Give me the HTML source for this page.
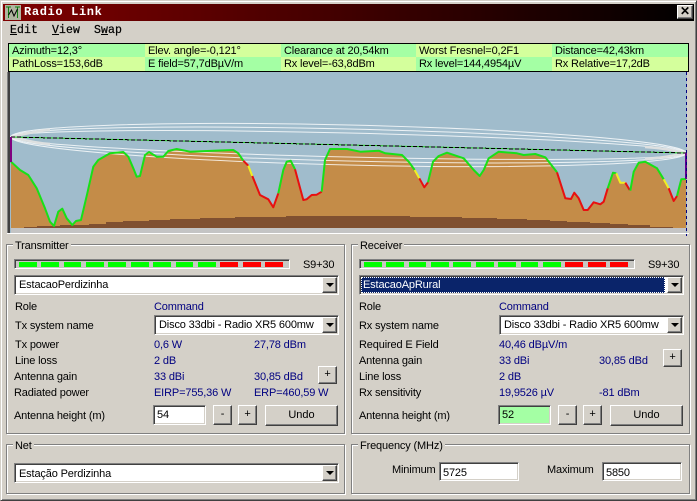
<!DOCTYPE html>
<html><head><meta charset="utf-8"><style>
html,body{margin:0;padding:0;background:#d4d0c8}
#w{position:relative;width:697px;height:501px;overflow:hidden;background:#d4d0c8;font:11px "Liberation Sans",sans-serif;letter-spacing:-.15px;color:#000}
#w div{position:absolute;box-sizing:border-box}
.t{white-space:nowrap;line-height:14px;height:14px;margin-top:1px}
.b{color:#000080}
.g{border:1px solid #808080;box-shadow:1px 1px 0 #fff,inset 1px 1px 0 #fff}
.l{background:#d4d0c8;padding:0 2px;line-height:13px;height:13px;white-space:nowrap;margin-top:1px}
.in{background:#fff;border:1px solid;border-color:#808080 #fff #fff #808080;box-shadow:inset 1px 1px 0 #404040,inset -1px -1px 0 #d4d0c8;white-space:nowrap}
.bt{background:#d4d0c8;border:1px solid;border-color:#fff #404040 #404040 #fff;box-shadow:inset -1px -1px 0 #808080;text-align:center;white-space:nowrap}
.ar{width:0;height:0;border-left:4px solid transparent;border-right:4px solid transparent;border-top:4px solid #000}
.c{white-space:nowrap;line-height:15px}
.m{background:#c8c8c4;border:1px solid;border-color:#808080 #fff #fff #808080;box-shadow:inset 1px 1px 0 #404040}
.s{height:5px;top:2px}
.ce{height:14px;line-height:14px;white-space:nowrap;padding-left:3px}
.r2{line-height:15px}
.y{background:#d4ff9c}.n{background:#a4ffa4}
</style></head><body><div id="w">
<div style="left:0;top:0;width:697px;height:501px;border:1px solid;border-color:#d4d0c8 #404040 #404040 #d4d0c8;box-shadow:inset 1px 1px 0 #fff,inset -1px -1px 0 #808080"></div>
<div style="left:3px;top:4px;width:691px;height:17px;background:linear-gradient(90deg,#800000,#000)"></div>
<div style="left:5px;top:5px;width:16px;height:15px;background:#b0b4a0"><svg width="16" height="15" style="display:block"><path d="M1 2h5M3.500 2v11M10 2h5M12.500 2v11" stroke="#108010" fill="none"/><path d="M3.500 10L6.500 5 9 11 12.500 4" stroke="#000" fill="none"/></svg></div>
<div class="t" style="left:24px;top:5px;margin:0;color:#fff;font:bold 12px/14px 'Liberation Mono',monospace;letter-spacing:.65px">Radio Link</div>
<div class="bt" style="left:677px;top:5px;width:16px;height:14px;font:bold 12px/11px 'Liberation Sans',sans-serif">✕</div>
<div class="t" style="left:10px;top:24px;margin:0;font:11.5px/14px 'Liberation Mono',monospace;-webkit-text-stroke:.2px #000;letter-spacing:.1px"><u>E</u>dit</div>
<div class="t" style="left:52px;top:24px;margin:0;font:11.5px/14px 'Liberation Mono',monospace;-webkit-text-stroke:.2px #000;letter-spacing:.1px"><u>V</u>iew</div>
<div class="t" style="left:94px;top:24px;margin:0;font:11.5px/14px 'Liberation Mono',monospace;-webkit-text-stroke:.2px #000;letter-spacing:.1px">S<u>w</u>ap</div>

<div style="left:8px;top:43px;width:681px;height:29px;border:1px solid #000;background:#000"></div>
<div class="ce n" style="left:9px;top:44px;width:136px">Azimuth=12,3°</div>
<div class="ce y" style="left:145px;top:44px;width:136px">Elev. angle=-0,121°</div>
<div class="ce n" style="left:281px;top:44px;width:135px">Clearance at 20,54km</div>
<div class="ce y" style="left:416px;top:44px;width:136px">Worst Fresnel=0,2F1</div>
<div class="ce n" style="left:552px;top:44px;width:136px">Distance=42,43km</div>
<div class="ce y r2" style="left:9px;top:57px;width:136px">PathLoss=153,6dB</div>
<div class="ce n r2" style="left:145px;top:57px;width:136px">E field=57,7dBµV/m</div>
<div class="ce y r2" style="left:281px;top:57px;width:135px">Rx level=-63,8dBm</div>
<div class="ce n r2" style="left:416px;top:57px;width:136px">Rx level=144,4954µV</div>
<div class="ce y r2" style="left:552px;top:57px;width:136px">Rx Relative=17,2dB</div>

<svg width="697" height="240" style="position:absolute;left:0;top:0">
<rect x="7" y="72" width="1" height="161" fill="#808080"/><rect x="8" y="72" width="2" height="161" fill="#404040"/>
<rect x="7" y="233" width="682" height="1" fill="#fff"/>
<rect x="10" y="72" width="677" height="161" fill="#a0bccc"/>
<rect x="11" y="228" width="675" height="5" fill="#c4c4c4"/>
<path fill="#c48c48" d="M11 161.700 20 170 28.300 175 36.700 188.300 45 208.300 50 221.700 54 226 58.300 211.700 62.300 208.700 66.700 218.300 72.300 225 76 221 81 220 87.300 193.300 93.300 166.700 98.300 160 110 153.300 123.300 152 128.300 156.700 133.300 168.300 136.700 176.700 140 176 145 155 149 152 156.700 156.700 163.300 156.700 168.300 151 176.700 149 190 151.700 213.300 150.700 233.300 150 238.300 153.300 243.300 160.700 248.300 165.700 252.300 176 260 195 268.300 199.300 273.300 207.300 278.300 193.300 283.300 170 286.700 161.700 290.700 160.700 295 169.300 303.300 200 306.700 199.300 311.700 195 316.700 194.700 321.700 191.700 325 160 330 149 347 149 360.300 151.700 378.700 150.700 385.300 153.300 402 155 408.700 161.700 414.700 170 419.300 178.300 424.300 187.300 428 182.300 433 161.700 438.700 156 447 152.700 463.700 158.300 473.700 170 479.700 176 483.700 170 488.700 158.300 498.700 151.700 517 153.300 523.700 155 535.300 154 545.300 157.300 557 172.300 565.300 198.300 571 199 574.300 192.700 578.700 198.300 583.700 210 587.700 210 593.700 202.300 600.300 204.300 603.700 201.700 607.700 188.300 613 172.700 616.300 173.300 620.300 182.700 625.300 182.700 629.700 190 630.300 190.700 633.700 171.700 638.700 162.700 645.300 161.700 657 168.300 663.700 179.300 668.700 188.300 673.700 201 677 196 681.300 179.300 686 179 686 228 11 228Z"/>
<path fill="#805030" d="M24 228V227H37V226H60V225H89V224H106V222H123V221H149V220H170V219H200V218H235V217H286V216H410V217H462V218H497V219H527V220H550V221H567V222H590V223H610V224H628V225H650V227H673V228Z"/>
<g fill="none" stroke="#fff" stroke-width="1" stroke-opacity=".8" transform="rotate(1.36 348.500 145)">
<ellipse cx="348.500" cy="145" rx="338" ry="20"/>
<ellipse cx="348.500" cy="145" rx="338" ry="16"/>
<ellipse cx="348.500" cy="145" rx="338" ry="12"/>
</g>
<path d="M11 137C30 133 36 131 50 130M11 137C30 141 36 143 50 144M686 153C665 149 660 148 645 147M686 153C665 157 660 158 645 159" stroke="#dde0e0" stroke-width="2.500" fill="none"/>
<path d="M11 137 686 153" stroke="#20d020" fill="none"/>
<path d="M11 137 686 153" stroke="#000" stroke-dasharray="4 2" fill="none" shape-rendering="crispEdges"/>
<g fill="none" stroke-width="2" stroke-linejoin="round">
<path stroke="#18e018" d="M11 161.700 20 170 28.300 175 36.700 188.300 45 208.300 50 221.700 54 226 58.300 211.700 62.300 208.700 66.700 218.300 72.300 225 76 221 81 220 87.300 193.300 93.300 166.700 98.300 160 110 153.300 123.300 152 128.300 156.700 133.300 168.300 136.700 176.700 140 176 145 155 149 152 156.700 156.700 163.300 156.700 168.300 151 176.700 149 190 151.700 213.300 150.700 233.300 150 238.300 153.300 243.300 160.700"/>
<path stroke="#e81010" d="M243.300 160.700 248.300 165.700"/>
<path stroke="#f0f020" d="M248.300 165.700 252.300 176"/>
<path stroke="#e81010" d="M252.300 176 260 195 268.300 199.300 273.300 207.300 278.300 193.300"/>
<path stroke="#18e018" d="M278.300 193.300 283.300 170 286.700 161.700 290.700 160.700 295 169.300"/>
<path stroke="#e81010" d="M295 169.300 303.300 200 306.700 199.300 311.700 195 316.700 194.700 321.700 191.700"/>
<path stroke="#18e018" d="M321.700 191.700 325 160 330 149 347 149 360.300 151.700 378.700 150.700 385.300 153.300 402 155 408.700 161.700 414.700 170"/>
<path stroke="#f0f020" d="M414.700 170 419.300 178.300"/>
<path stroke="#e81010" d="M419.300 178.300 424.300 187.300 428 182.300"/>
<path stroke="#18e018" d="M428 182.300 433 161.700 438.700 156 447 152.700 463.700 158.300 473.700 170 479.700 176 483.700 170 488.700 158.300 498.700 151.700 517 153.300 523.700 155 535.300 154 545.300 157.300 557 172.300"/>
<path stroke="#e81010" d="M557 172.300 565.300 198.300 571 199 574.300 192.700 578.700 198.300 583.700 210 587.700 210 593.700 202.300 600.300 204.300 603.700 201.700 607.700 188.300"/>
<path stroke="#18e018" d="M607.700 188.300 613 172.700 616.300 173.300"/>
<path stroke="#f0f020" d="M616.300 173.300 620.300 182.700 625.300 182.700"/>
<path stroke="#e81010" d="M625.300 182.700 629.700 190"/>
<path stroke="#18e018" d="M630.300 190.700 633.700 171.700 638.700 162.700 645.300 161.700 657 168.300 663.700 179.300"/>
<path stroke="#f0f020" d="M663.700 179.300 668.700 188.300"/>
<path stroke="#e81010" d="M668.700 188.300 673.700 201 677 196"/>
<path stroke="#18e018" d="M677 196 681.300 179.300 686 179"/>
</g>
<rect x="10" y="137" width="2" height="25" fill="#800080"/>
<rect x="685" y="153" width="2" height="26" fill="#600090"/>
<path d="M686.500 72V236" stroke="#000080" stroke-dasharray="3 3"/>
</svg>

<!-- Transmitter -->
<div class="g" style="left:6px;top:244px;width:339px;height:190px"></div>
<div class="l" style="left:13px;top:239px">Transmitter</div>
<div class="m" style="left:14px;top:259px;width:276px;height:10px">
<div class="s" style="left:4px;width:18px;background:#0f0"></div><div class="s" style="left:26px;width:18px;background:#0f0"></div><div class="s" style="left:49px;width:17px;background:#0f0"></div><div class="s" style="left:71px;width:18px;background:#0f0"></div><div class="s" style="left:93px;width:18px;background:#0f0"></div><div class="s" style="left:116px;width:18px;background:#0f0"></div><div class="s" style="left:138px;width:18px;background:#0f0"></div><div class="s" style="left:161px;width:17px;background:#0f0"></div><div class="s" style="left:183px;width:18px;background:#0f0"></div><div class="s" style="left:205px;width:18px;background:#f00"></div><div class="s" style="left:228px;width:18px;background:#f00"></div><div class="s" style="left:250px;width:18px;background:#f00"></div>
</div>
<div class="t" style="left:303px;top:257px">S9+30</div>
<div class="in c" style="left:14px;top:275px;width:325px;height:20px;padding:2px 0 0 4px">EstacaoPerdizinha</div>
<div class="bt" style="left:322px;top:277px;width:15px;height:16px"><div class="ar" style="left:3px;top:5px"></div></div>
<div class="t" style="left:15px;top:299px">Role</div><div class="t b" style="left:154px;top:299px">Command</div>
<div class="t" style="left:15px;top:318px">Tx system name</div>
<div class="in c" style="left:154px;top:315px;width:185px;height:20px;padding:2px 0 0 4px">Disco 33dbi - Radio XR5 600mw</div>
<div class="bt" style="left:322px;top:317px;width:15px;height:16px"><div class="ar" style="left:3px;top:5px"></div></div>
<div class="t" style="left:15px;top:337px">Tx power</div><div class="t b" style="left:154px;top:337px">0,6 W</div><div class="t b" style="left:254px;top:337px">27,78 dBm</div>
<div class="t" style="left:15px;top:353px">Line loss</div><div class="t b" style="left:154px;top:353px">2 dB</div>
<div class="t" style="left:14px;top:369px">Antenna gain</div><div class="t b" style="left:154px;top:369px">33 dBi</div><div class="t b" style="left:254px;top:369px">30,85 dBd</div>
<div class="bt" style="left:318px;top:366px;width:19px;height:18px;line-height:15px">+</div>
<div class="t" style="left:14px;top:385px">Radiated power</div><div class="t b" style="left:154px;top:385px">EIRP=755,36 W</div><div class="t b" style="left:254px;top:385px">ERP=460,59 W</div>
<div class="t" style="left:14px;top:408px">Antenna height (m)</div>
<div class="in c" style="left:153px;top:405px;width:53px;height:20px;padding:2px 0 0 3px">54</div>
<div class="bt" style="left:213px;top:405px;width:19px;height:20px;line-height:17px">-</div>
<div class="bt" style="left:238px;top:405px;width:19px;height:20px;line-height:17px">+</div>
<div class="bt" style="left:265px;top:405px;width:73px;height:21px;line-height:19px;letter-spacing:0">Undo</div>

<!-- Net -->
<div class="g" style="left:6px;top:444px;width:339px;height:50px"></div>
<div class="l" style="left:13px;top:439px">Net</div>
<div class="in c" style="left:14px;top:463px;width:325px;height:20px;padding:3px 0 0 4px">Estação Perdizinha</div>
<div class="bt" style="left:322px;top:465px;width:15px;height:16px"><div class="ar" style="left:3px;top:5px"></div></div>

<!-- Receiver -->
<div class="g" style="left:351px;top:244px;width:339px;height:190px"></div>
<div class="l" style="left:358px;top:239px">Receiver</div>
<div class="m" style="left:359px;top:259px;width:276px;height:10px">
<div class="s" style="left:4px;width:18px;background:#0f0"></div><div class="s" style="left:26px;width:18px;background:#0f0"></div><div class="s" style="left:49px;width:17px;background:#0f0"></div><div class="s" style="left:71px;width:18px;background:#0f0"></div><div class="s" style="left:93px;width:18px;background:#0f0"></div><div class="s" style="left:116px;width:18px;background:#0f0"></div><div class="s" style="left:138px;width:18px;background:#0f0"></div><div class="s" style="left:161px;width:17px;background:#0f0"></div><div class="s" style="left:183px;width:18px;background:#0f0"></div><div class="s" style="left:205px;width:18px;background:#f00"></div><div class="s" style="left:228px;width:18px;background:#f00"></div><div class="s" style="left:250px;width:18px;background:#f00"></div>
</div>
<div class="t" style="left:648px;top:257px">S9+30</div>
<div class="in" style="left:359px;top:275px;width:325px;height:20px"></div>
<div class="c" style="left:361px;top:277px;width:304px;height:16px;background:#0a246a;color:#fff;outline:1px dotted #fff;outline-offset:-1px;padding:1px 0 0 2px">EstacaoApRural</div>
<div class="bt" style="left:667px;top:277px;width:15px;height:16px"><div class="ar" style="left:3px;top:5px"></div></div>
<div class="t" style="left:359px;top:299px">Role</div><div class="t b" style="left:499px;top:299px">Command</div>
<div class="t" style="left:359px;top:318px">Rx system name</div>
<div class="in c" style="left:499px;top:315px;width:185px;height:20px;padding:2px 0 0 4px">Disco 33dbi - Radio XR5 600mw</div>
<div class="bt" style="left:667px;top:317px;width:15px;height:16px"><div class="ar" style="left:3px;top:5px"></div></div>
<div class="t" style="left:359px;top:337px">Required E Field</div><div class="t b" style="left:499px;top:337px">40,46 dBµV/m</div>
<div class="t" style="left:359px;top:353px">Antenna gain</div><div class="t b" style="left:499px;top:353px">33 dBi</div><div class="t b" style="left:599px;top:353px">30,85 dBd</div>
<div class="bt" style="left:663px;top:349px;width:19px;height:18px;line-height:15px">+</div>
<div class="t" style="left:359px;top:369px">Line loss</div><div class="t b" style="left:499px;top:369px">2 dB</div>
<div class="t" style="left:359px;top:385px">Rx sensitivity</div><div class="t b" style="left:499px;top:385px">19,9526 µV</div><div class="t b" style="left:599px;top:385px">-81 dBm</div>
<div class="t" style="left:359px;top:408px">Antenna height (m)</div>
<div class="in c" style="left:498px;top:405px;width:53px;height:20px;padding:2px 0 0 3px;background:#a4ffa4">52</div>
<div class="bt" style="left:558px;top:405px;width:19px;height:20px;line-height:17px">-</div>
<div class="bt" style="left:583px;top:405px;width:19px;height:20px;line-height:17px">+</div>
<div class="bt" style="left:610px;top:405px;width:73px;height:21px;line-height:19px;letter-spacing:0">Undo</div>

<!-- Frequency -->
<div class="g" style="left:351px;top:444px;width:339px;height:50px"></div>
<div class="l" style="left:358px;top:439px">Frequency (MHz)</div>
<div class="t" style="left:392px;top:462px">Minimum</div>
<div class="in c" style="left:439px;top:462px;width:80px;height:19px;padding:3px 0 0 3px">5725</div>
<div class="t" style="left:547px;top:462px">Maximum</div>
<div class="in c" style="left:602px;top:462px;width:80px;height:19px;padding:3px 0 0 3px">5850</div>
</div></body></html>
